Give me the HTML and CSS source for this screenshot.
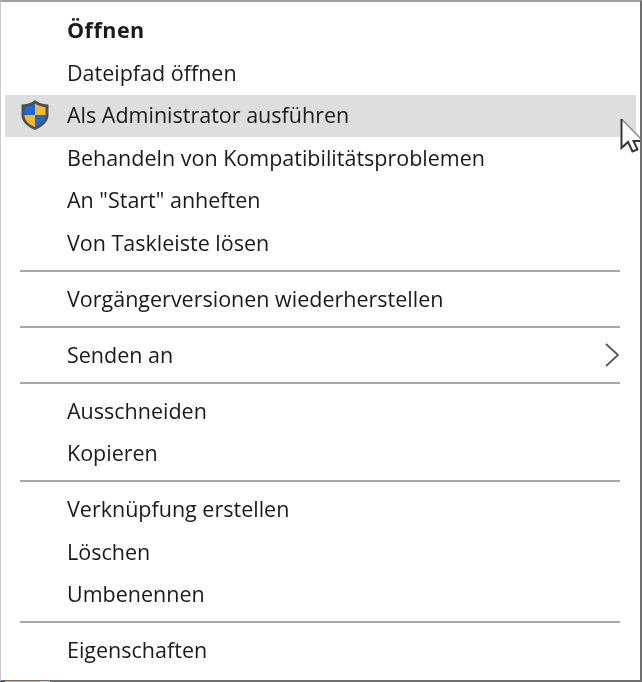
FILE: index.html
```html
<!DOCTYPE html>
<html lang="de">
  <head>
    <meta charset="UTF-8" />
    <meta name="viewport" content="width=device-width, initial-scale=1.0" />
    <title>Kontextmenü</title>
    <link rel="stylesheet" href="styles.css">
  </head>
  <body>
    <div class="menu">
      <div class="item bold">Öffnen</div>
      <div class="item">Dateipfad öffnen</div>
      <div class="item hover">
        <svg class="shield" width="30" height="32" viewBox="0 0 30 32">
          <path d="M15 1 L17 2.5 C20 4.5 24 5.5 28.5 5.5 L28.5 16 C28.5 23 22 28 15 31 C8 28 1.5 23 1.5 16 L1.5 5.5 C6 5.5 10 4.5 13 2.5 Z" fill="#4a5058" />
          <path d="M15 4.5 C12 6.5 8 8 4.5 8.2 L4.5 16 L15 16 Z" fill="#1a6ad0" />
          <path d="M15 4.5 C18 6.5 22 8 25.5 8.2 L25.5 16 L15 16 Z" fill="#fbb82c" />
          <path d="M4.5 16 C4.5 22 9 25.5 15 28 L15 16 Z" fill="#fbb82c" />
          <path d="M25.5 16 C25.5 22 21 25.5 15 28 L15 16 Z" fill="#1a6ad0" />
        </svg>
        <span class="hover-label">Als Administrator ausführen</span>
      </div>
      <div class="item">Behandeln von Kompatibilitätsproblemen</div>
      <div class="item">An "Start" anheften</div>
      <div class="item">Von Taskleiste lösen</div>
      <div class="sep"></div>
      <div class="item">Vorgängerversionen wiederherstellen</div>
      <div class="sep"></div>
      <div class="item">
        Senden an
        <svg class="arrow" width="16" height="26" viewBox="0 0 16 26">
          <path d="M2 2 L14 13 L2 24" fill="none" stroke="#5a5560" stroke-width="1.8" />
        </svg>
      </div>
      <div class="sep"></div>
      <div class="item">Ausschneiden</div>
      <div class="item">Kopieren</div>
      <div class="sep"></div>
      <div class="item">Verknüpfung erstellen</div>
      <div class="item">Löschen</div>
      <div class="item">Umbenennen</div>
      <div class="sep"></div>
      <div class="item">Eigenschaften</div>

      <svg class="cursor" width="24" height="36" viewBox="0 0 24 36">
        <path d="M1.5 1 L1.5 30 L8 24 L12.5 33.5 L17.5 31.5 L13.5 23 L22 23 Z" fill="#fff" />
        <path d="M1.5 23 L22 23" fill="none" stroke="#fff" stroke-width="1" />
        <path d="M1.5 1 L22 22" fill="none" stroke="#8c8f94" stroke-width="1.6" />
        <path d="M1.5 1 L1.5 30 L8 24 L12.5 33.5 L17.5 31.5 L13.5 23 L22 23" fill="none" stroke="#33373d" stroke-width="2" />
      </svg>
    </div>
    <div class="taskbar-edge"></div>
  </body>
</html>
```

FILE: styles.css
```css
* {
  box-sizing: border-box;
}
html,
body {
  margin: 0;
  height: 100%;
  background: #fff;
}
body {
  position: relative;
  overflow: hidden;
}
.menu {
  position: relative;
  width: 642px;
  height: 682px;
  padding: 8px 4px 0 1px;
  background: #fff;
  border-top: 2px solid #a0a0a0;
  border-right: 2px solid #6e6e6e;
  border-bottom: 2px solid #6e6e6e;
  border-left: 1px solid #c8c8c8;
  font-family: "Open Sans", sans-serif;
  font-size: 21.5px;
  color: #1a1a1a;
  overflow: hidden;
  filter: blur(0.4px);
}
.item {
  position: relative;
  display: flex;
  align-items: center;
  height: 42.4px;
  padding-left: 65px;
  padding-bottom: 1.6px;
  white-space: nowrap;
}
.bold {
  font-weight: 700;
  padding-bottom: 3px;
  letter-spacing: 0.5px;
}
.hover {
  margin-left: 3px;
  padding-left: 62px;
  padding-bottom: 3px;
  background: #dedede;
}
.shield {
  position: absolute;
  left: 15px;
  top: 4px;
}
.arrow {
  position: absolute;
  right: 16px;
  top: 8px;
}
.sep {
  height: 13.6px;
  margin: 0 16px 0 18px;
  display: flex;
  align-items: center;
}
.sep::before {
  content: "";
  width: 100%;
  height: 2px;
  background: #a8a8a8;
}
.cursor {
  position: absolute;
  left: 619px;
  top: 116px;
}
/* sliver of the taskbar under the menu */
.taskbar-edge {
  position: absolute;
  left: 0;
  bottom: 0;
  width: 80px;
  height: 1px;
  background: linear-gradient(to right, #2b3f7a 0 5px, #dda27f 5px 40px, #d8d8d8 40px 50px, #667078 50px 75px, #6e6e6e 75px);
}
```
